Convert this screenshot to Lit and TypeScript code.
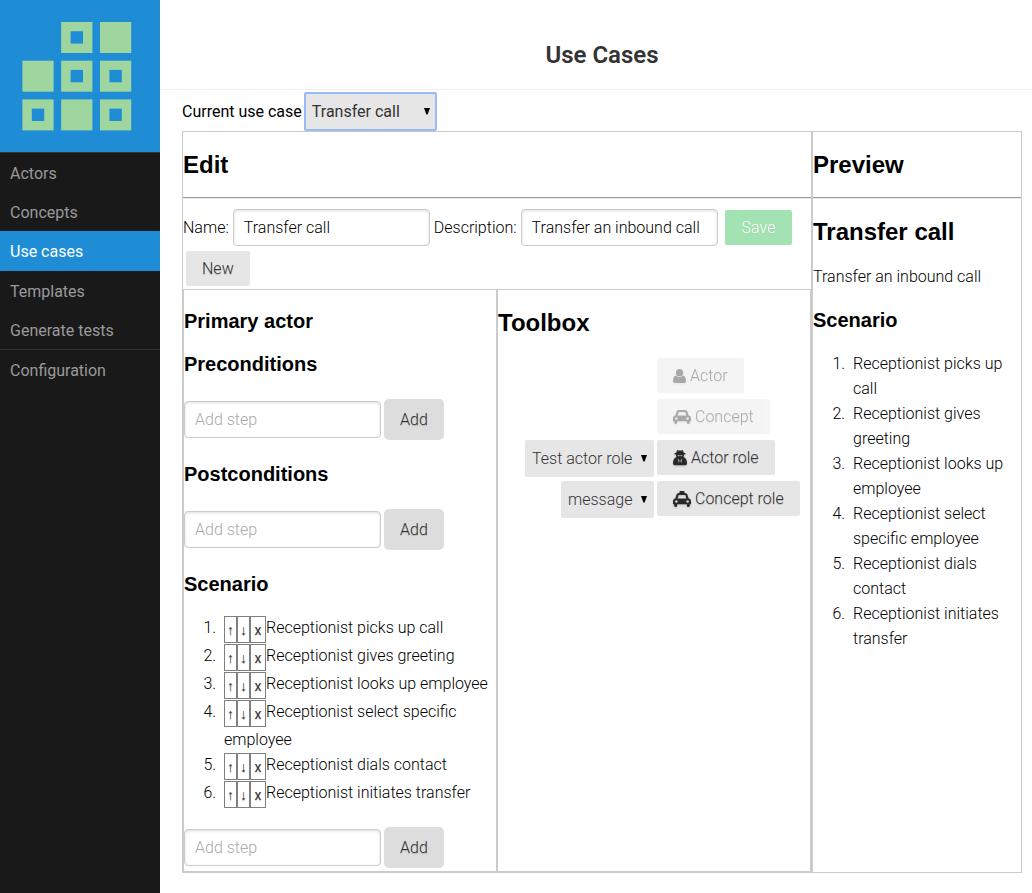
import { LitElement, html, svg, css, nothing } from "lit";
import { customElement, property, state } from "lit/decorators.js";
import { classMap } from "lit/directives/class-map.js";

const ARROW = css`url("data:image/svg+xml,%3Csvg xmlns='http://www.w3.org/2000/svg' width='6' height='7'%3E%3Cpath d='M0 0h6L3.6 6.5h-1.2z'/%3E%3C/svg%3E")`;

const shared = css`
  * { box-sizing: border-box; }
  h2, h3 { font-family: "Liberation Sans", Arial, sans-serif; font-weight: 700; }
  h2 { font-size: 24px; line-height: 25px; margin: 20px 0; }
  h3 { font-size: 20px; line-height: 24px; margin: 19px 0; }
  button, input, select { font: inherit; }
  .button {
    height: 35px;
    margin: 3px;
    padding: 0 16px;
    border: 0;
    border-radius: 2px;
    background: #e6e6e6;
    color: rgba(0, 0, 0, 0.8);
    text-shadow: 0 1px 1px rgba(0, 0, 0, 0.2);
    white-space: nowrap;
  }
  .button:disabled { opacity: 0.4; }
  .primary { padding: 0 17px; background: #1cb841; color: #fff; }
  .text {
    width: 197px;
    height: 37px;
    padding: 0 10px;
    border: 1px solid #ccc;
    border-radius: 4px;
    box-shadow: inset 0 1px 3px #ddd;
    background: #fff;
    color: #000;
  }
  .text::placeholder { color: #a9a9a9; }
  .select {
    appearance: none;
    height: 37px;
    padding: 0 21px 0 7px;
    border: 0;
    border-radius: 2px;
    background: #e6e6e6 ${ARROW} no-repeat right 7px center;
    color: #333;
  }
`;

const ICONS = {
  user: { w: 13, body: svg`<circle cx="6.500" cy="3.700" r="3.600"/><path d="M3 6.600C1 7 0 8.800 0 12v.6C0 13.500.8 14 1.600 14h9.800c.8 0 1.600-.5 1.600-1.400V12c0-3.200-1-5-3-5.400a4.800 4.800 0 0 1-7 0z"/>` },
  car: { w: 18, body: svg`<path fill-rule="evenodd" d="M2.300 5.600 3.500 1.800C3.800.7 4.700 0 5.800 0h6.400c1.100 0 2 .7 2.300 1.800l1.200 3.800C17.200 5.800 18 6.800 18 8.200v3h-1.200v1.300a1.500 1.500 0 0 1-3 0v-1.300H4.200v1.300a1.500 1.500 0 0 1-3 0v-1.300H0v-3c0-1.400.8-2.400 2.300-2.600zM4.600 5.500h8.800l-1-3.200a.4.400 0 0 0-.4-.3H6a.4.400 0 0 0-.4.300zM3.400 7.200a1.300 1.300 0 1 0 0 2.600 1.300 1.300 0 0 0 0-2.600zm11.200 0a1.300 1.300 0 1 0 0 2.600 1.300 1.300 0 0 0 0-2.600z"/>` },
  secret: { w: 14, body: svg`<path fill-rule="evenodd" d="M4 .6C4.600-.2 5.600.4 7 .5 8.400.4 9.400-.2 10 .6l.8 2.200c1.100.2 1.900.5 1.900.9 0 .5-.8.800-1.700.9.100 1-.1 1.700-.6 2.400 2.300.8 3.600 3 3.600 6 0 1.500-.9 2.300-2.200 2.300H2.200C.9 15.300 0 14.500 0 13c0-3 1.300-5.200 3.600-6-.5-.7-.7-1.400-.6-2.400-.9-.1-1.700-.4-1.700-.9 0-.4.800-.7 1.900-.9zM4.400 5.300c.3.900 1 1.200 1.800 1l.5-.7h.6l.5.7c.8.200 1.500-.1 1.800-1zM4.800 8.500 6 13.600l.4-3.400zm4.400 0-1.600 1.700.4 3.400z"/>` },
  taxi: { w: 18, body: svg`<path fill-rule="evenodd" d="M6.500 2V.6c0-.4.2-.6.6-.6h3.800c.4 0 .6.200.6.600V2h.7c1.100 0 2 .7 2.300 1.800l1.200 3.800c1.500.2 2.300 1.200 2.300 2.600v3h-1.200v1.300a1.500 1.500 0 0 1-3 0v-1.300H4.200v1.300a1.500 1.500 0 0 1-3 0v-1.300H0v-3c0-1.400.8-2.400 2.300-2.600l1.200-3.800C3.800 2.700 4.700 2 5.800 2zM4.600 7.500h8.800l-1-3.200a.4.400 0 0 0-.4-.3H6a.4.400 0 0 0-.4.300zM3.400 9.200a1.300 1.300 0 1 0 0 2.600 1.300 1.300 0 0 0 0-2.600zm11.200 0a1.300 1.300 0 1 0 0 2.600 1.300 1.300 0 0 0 0-2.600z"/>` },
};

@customElement("tool-button")
class ToolButton extends LitElement {
  static styles = [shared, css`
    :host { display: block; }
    .tool { display: flex; align-items: center; gap: 4px; }
    .icon { fill: currentColor; filter: drop-shadow(0 1px 1px rgba(0, 0, 0, 0.2)); }
  `];
  @property() icon: keyof typeof ICONS = "user";
  @property() label = "";
  @property({ type: Boolean }) disabled = false;

  render() {
    const { w, body } = ICONS[this.icon];
    const h = this.icon === "user" || this.icon === "car" ? 14 : 16;
    return html`<button class="button tool" ?disabled=${this.disabled}>
      <svg class="icon" width=${w} height=${h} viewBox="0 0 ${w} ${h}" aria-hidden="true">${body}</svg>
      <span>${this.label}</span>
    </button>`;
  }
}

@customElement("step-adder")
class StepAdder extends LitElement {
  static styles = [shared, css`
    :host { display: block; }
    .adder { display: flex; align-items: baseline; gap: 3px; margin: 0; padding: 4px 0 3px; }
    .add { height: 41px; margin: 0; border-radius: 5px; background: #ddd; }
  `];
  render() {
    return html`<form class="adder" @submit=${(e: Event) => e.preventDefault()}>
      <input class="text" placeholder="Add step" aria-label="Add step">
      <button class="button add">Add</button>
    </form>`;
  }
}

@customElement("app-root")
class AppRoot extends LitElement {
  static styles = [shared, css`
    :host {
      display: grid;
      grid-template-columns: 160px minmax(0, 1fr);
      min-height: 100vh;
      background: #fff;
      color: #000;
      font: 300 16px/25px Roboto, sans-serif;
    }
    .side { background: #191919; font-weight: 400; }
    .logo { display: block; width: 100%; background: #1f8dd6; }
    .menu { list-style: none; margin: 0; padding: 0; border-top: 1px solid #333; }
    .link { display: block; padding: 2px 10px 0; line-height: 37px; color: #999; text-decoration: none; }
    .selected { background: #1f8dd6; color: #fff; line-height: 38px; }
    .divided { border-top: 1px solid #333; }

    .header { padding: 41px 10px 19px 22px; border-bottom: 1px solid #eee; text-align: center; }
    .title { margin: 0; font-size: 24px; font-weight: 600; line-height: 29px; color: #333; }
    .content { padding: 2px 10px 20px 22px; }
    .current { display: flex; align-items: center; gap: 2px; font-weight: 400; }
    .chooser { height: 39px; padding: 0 35px 0 6px; border: 2px solid #98bbf7; background-position: right 5px center; }

    .panels { display: grid; grid-template-columns: 3fr 1fr; }
    .panel { border: 1px solid #cbcbcb; min-width: 0; }
    .rule { margin: 0; border: 0 solid #999; border-width: 1px 0; border-bottom-color: #eee; }
    .form { display: flex; flex-wrap: wrap; align-items: center; gap: 0 4px; padding-top: 8px; }
    .columns { display: grid; grid-template-columns: 1fr 1fr; }
    .steps { margin: 19px 0; padding-left: 36px; }
    .steps li { padding-left: 4px; }
    .editable { margin-bottom: 15px; }
    .moves { display: inline-flex; vertical-align: top; padding-top: 1px; }
    .move {
      width: 13px;
      height: 27px;
      padding: 2px 0 0;
      border: 1px solid #808080;
      background: #fff;
      color: #333;
      font: 400 14px/23px Roboto, "Liberation Sans", sans-serif;
      text-shadow: 0 1px 1px rgba(0, 0, 0, 0.2);
    }
    .remove { width: 16px; }
    .description { margin: 0; }
    .toolbox { display: grid; grid-template-columns: 1fr 1fr; }
    .role { justify-self: end; align-self: end; margin-bottom: 1px; }
    .tool { grid-column: 2; }
  `];

  @state() steps = [
    "Receptionist picks up call",
    "Receptionist gives greeting",
    "Receptionist looks up employee",
    "Receptionist select specific employee",
    "Receptionist dials contact",
    "Receptionist initiates transfer",
  ];

  private logo() {
    const tiles: [number, number, boolean][] = [
      [1, 0, true], [2, 0, false],
      [0, 1, false], [1, 1, true], [2, 1, true],
      [0, 2, true], [1, 2, false], [2, 2, true],
    ];
    return html`<svg class="logo" viewBox="0 0 160 152" role="img" aria-label="Logo">
      ${tiles.map(([c, r, hole]) => {
        const x = 22.4 + c * 38.8, y = 22 + r * 38.7;
        return svg`<rect x=${x} y=${y} width="31.200" height="31" fill="#9fd6a0"/>
          ${hole ? svg`<rect x=${x + 9.4} y=${y + 9.2} width="12.400" height="12.400" fill="#1f8dd6"/>` : nothing}`;
      })}
    </svg>`;
  }

  render() {
    const links = ["Actors", "Concepts", "Use cases", "Templates", "Generate tests", "Configuration"];
    return html`
      <nav class="side">
        ${this.logo()}
        <ul class="menu">
          ${links.map((l) => html`<li class=${classMap({ divided: l === "Configuration" })}>
            <a href="#" class=${classMap({ link: true, selected: l === "Use cases" })}>${l}</a></li>`)}
        </ul>
      </nav>
      <main>
        <header class="header"><h1 class="title">Use Cases</h1></header>
        <div class="content">
          <div class="current">
            <label for="current">Current use case</label>
            <select id="current" class="select chooser"><option>Transfer call</option></select>
          </div>
          <div class="panels">
            <section class="panel">
              <h2>Edit</h2>
              <hr class="rule">
              <div class="form">
                <label for="name">Name:</label>
                <input id="name" class="text" value="Transfer call">
                <label for="description">Description:</label>
                <input id="description" class="text" value="Transfer an inbound call">
                <button class="button primary" disabled>Save</button>
                <button class="button">New</button>
              </div>
              <div class="columns">
                <div class="panel">
                  <h3>Primary actor</h3>
                  <h3>Preconditions</h3>
                  <step-adder></step-adder>
                  <h3>Postconditions</h3>
                  <step-adder></step-adder>
                  <h3>Scenario</h3>
                  <ol class="steps editable">
                    ${this.steps.map((s) => html`<li><span class="moves"
                      ><button class="move" aria-label="Move up">↑</button
                      ><button class="move" aria-label="Move down">↓</button
                      ><button class="move remove" aria-label="Remove">x</button></span>${s}</li>`)}
                  </ol>
                  <step-adder></step-adder>
                </div>
                <div class="panel">
                  <h2>Toolbox</h2>
                  <div class="toolbox">
                    <tool-button class="tool" icon="user" label="Actor" disabled></tool-button>
                    <tool-button class="tool" icon="car" label="Concept" disabled></tool-button>
                    <select class="select role" aria-label="Actor role"><option>Test actor role</option></select>
                    <tool-button class="tool" icon="secret" label="Actor role"></tool-button>
                    <select class="select role" aria-label="Concept role"><option>message</option></select>
                    <tool-button class="tool" icon="taxi" label="Concept role"></tool-button>
                  </div>
                </div>
              </div>
            </section>
            <section class="panel">
              <h2>Preview</h2>
              <hr class="rule">
              <h2>Transfer call</h2>
              <p class="description">Transfer an inbound call</p>
              <h3>Scenario</h3>
              <ol class="steps">${this.steps.map((s) => html`<li>${s}</li>`)}</ol>
            </section>
          </div>
        </div>
      </main>`;
  }
}
